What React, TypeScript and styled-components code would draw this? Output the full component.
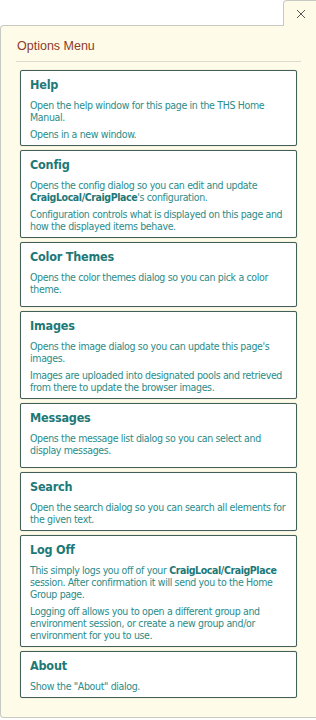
import React from "react";
import styled, { createGlobalStyle } from "styled-components";

const Global = createGlobalStyle`
  html, body { margin: 0; padding: 0; background: #ffffff; }
  body { font-family: "DejaVu Sans Condensed", "DejaVu Sans", sans-serif; }
  * { box-sizing: border-box; }
`;

const Frame = styled.div`
  width: 316px;
  height: 720px;
  display: flex;
  flex-direction: column;
  overflow: hidden;
`;

const TabRow = styled.div`
  height: 25px;
  display: flex;
  justify-content: flex-end;
`;

const CloseTab = styled.div`
  width: 33px;
  height: 26px;
  margin-bottom: -1px;
  background: #fefce8;
  border-left: 1px solid #c9c9c3;
  border-top: 1px solid #c9c9c3;
  border-top-left-radius: 4px;
  display: flex;
  align-items: center;
  justify-content: center;
  position: relative;
  z-index: 1;
  padding-left: 2px;
`;

const Panel = styled.div`
  height: 693px;
  background: #fefce8;
  border-top: 1px solid #c9c9c3;
  border-left: 1px solid #c9c9c3;
  border-bottom: 1px solid #c9c9c3;
  border-radius: 4px 0 0 4px;
  padding: 0 15px 0 15px;
`;

const Header = styled.div`
  font-family: "Liberation Sans", Arial, sans-serif;
  font-size: 12.5px;
  color: #8b3a2c;
  padding: 13px 0 8px 1px;
  border-bottom: 1px solid #dcdad0;
`;

const List = styled.div`
  display: flex;
  flex-direction: column;
  gap: 4px;
  padding: 8px 4px 0 4px;
`;

const Card = styled.div<{ $tail?: boolean }>`
  background: #ffffff;
  border: 1px solid #425f5a;
  border-radius: 2px;
  box-shadow: 0 0 1px rgba(0, 0, 0, 0.35);
  padding: 6px 9px ${(p) => (p.$tail ? 11 : 5)}px 9px;
`;

const Title = styled.div`
  font-family: "DejaVu Sans Condensed", "DejaVu Sans", sans-serif;
  font-weight: bold;
  font-size: 12.5px;
  letter-spacing: -0.2px;
  line-height: 16px;
  color: #1d7877;
  margin-bottom: 6px;
`;

const Para = styled.p`
  margin: 0;
  font-size: 10.5px;
  line-height: 12px;
  letter-spacing: -0.35px;
  color: #2b8c89;
  & + & { margin-top: 5px; }
  b { color: #1d7877; letter-spacing: -0.4px; }
`;

const items: { title: string; tail?: boolean; paras: React.ReactNode[] }[] = [
  {
    title: "Help",
    paras: [
      "Open the help window for this page in the THS Home Manual.",
      "Opens in a new window.",
    ],
  },
  {
    title: "Config",
    paras: [
      <>
        Opens the config dialog so you can edit and update{" "}
        <b>CraigLocal/CraigPlace</b>'s configuration.
      </>,
      "Configuration controls what is displayed on this page and how the displayed items behave.",
    ],
  },
  {
    title: "Color Themes",
    tail: true,
    paras: ["Opens the color themes dialog so you can pick a color theme."],
  },
  {
    title: "Images",
    paras: [
      "Opens the image dialog so you can update this page's images.",
      "Images are uploaded into designated pools and retrieved from there to update the browser images.",
    ],
  },
  {
    title: "Messages",
    tail: true,
    paras: ["Opens the message list dialog so you can select and display messages."],
  },
  {
    title: "Search",
    paras: ["Open the search dialog so you can search all elements for the given text."],
  },
  {
    title: "Log Off",
    paras: [
      <>
        This simply logs you off of your <b>CraigLocal/CraigPlace</b> session. After
        confirmation it will send you to the Home Group page.
      </>,
      "Logging off allows you to open a different group and environment session, or create a new group and/or environment for you to use.",
    ],
  },
  {
    title: "About",
    paras: ['Show the "About" dialog.'],
  },
];

export default function App() {
  return (
    <>
      <Global />
      <Frame>
        <TabRow>
          <CloseTab>
            <svg width="10" height="10" viewBox="0 0 10 10">
              <path d="M1 1 L9 9 M9 1 L1 9" stroke="#555" strokeWidth="1" fill="none" />
            </svg>
          </CloseTab>
        </TabRow>
        <Panel>
          <Header>Options Menu</Header>
          <List>
            {items.map((it) => (
              <Card key={it.title} $tail={it.tail}>
                <Title>{it.title}</Title>
                {it.paras.map((p, i) => (
                  <Para key={i}>{p}</Para>
                ))}
              </Card>
            ))}
          </List>
        </Panel>
      </Frame>
    </>
  );
}
